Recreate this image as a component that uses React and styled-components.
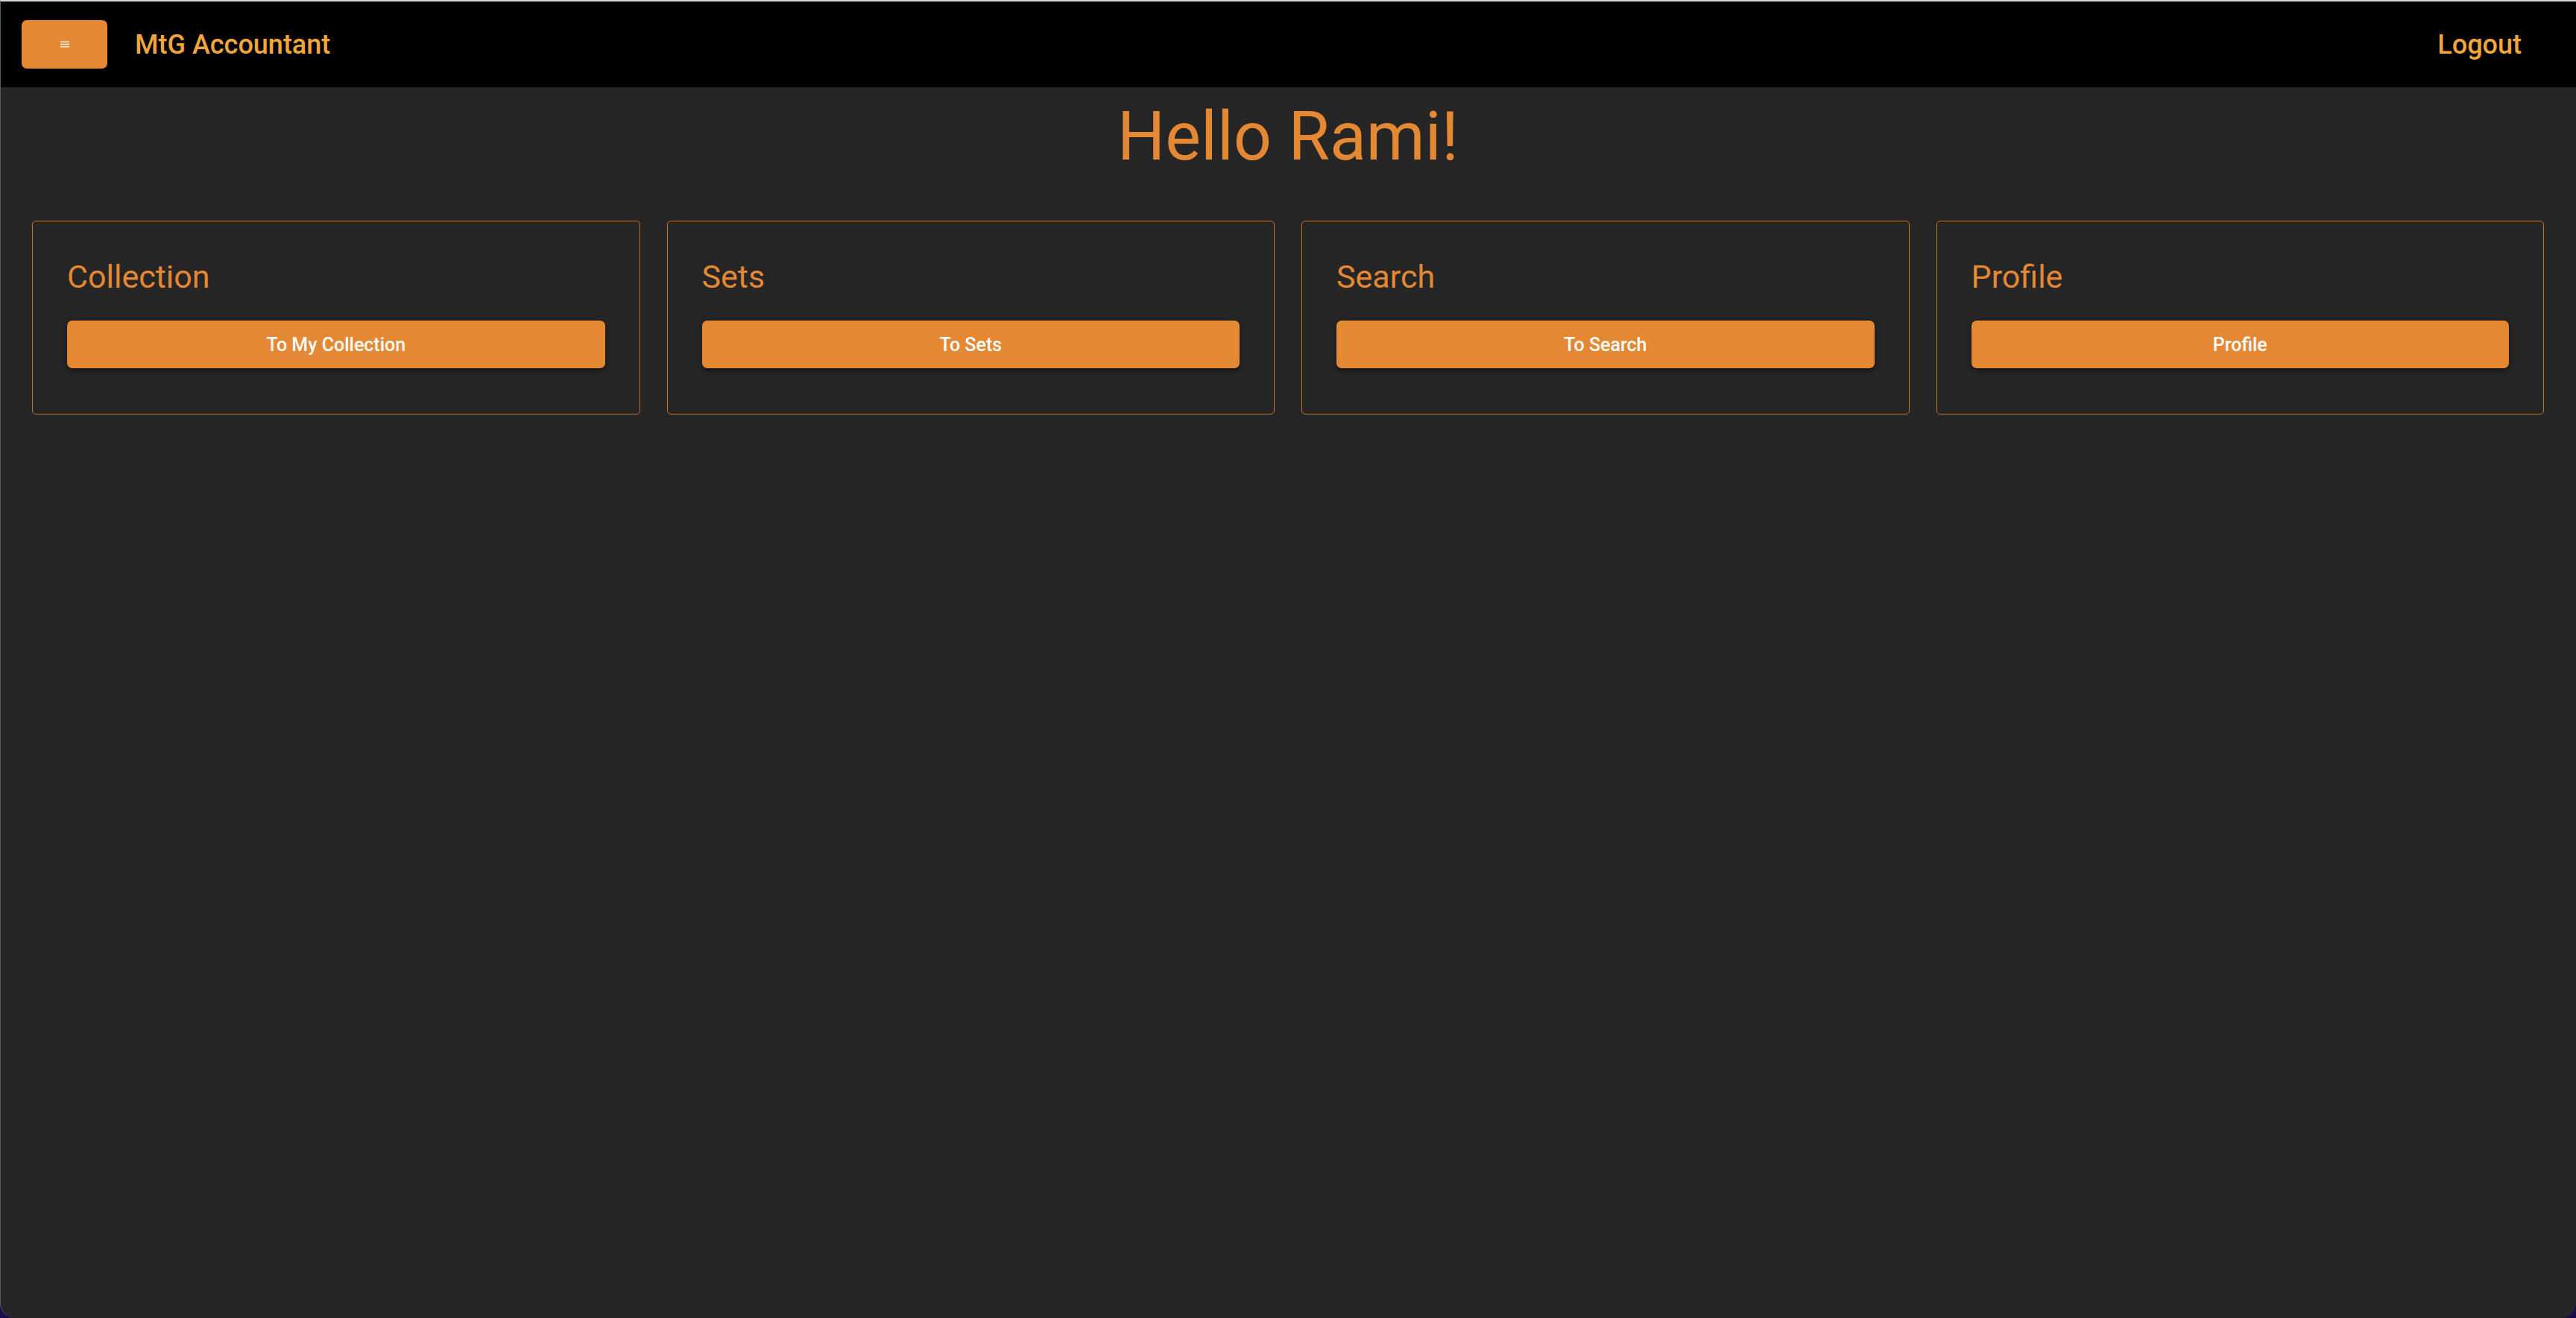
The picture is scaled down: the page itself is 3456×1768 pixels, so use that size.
import React from "react"
import styled, { createGlobalStyle } from "styled-components"

const GlobalStyle = createGlobalStyle`
  html, body {
    margin: 0;
    padding: 0;
    background: #1c0b4f;
  }
  body {
    font-family: Roboto, "Liberation Sans", sans-serif;
  }
`

const Frame = styled.div`
  min-height: 1768px;
  box-sizing: border-box;
  background: #262626;
  border-top: 2px solid #d6d6d6;
  border-left: 1px solid #5a5a5a;
  border-radius: 0 0 20px 20px;
  overflow: hidden;
`

const NavBar = styled.header`
  height: 115px;
  background: #000;
  display: flex;
  align-items: center;
  padding: 0 73px 0 28px;
`

const MenuButton = styled.button`
  width: 115px;
  height: 65px;
  border: none;
  border-radius: 7px;
  background: #e48834;
  display: flex;
  align-items: center;
  justify-content: center;
  padding: 0;
  cursor: pointer;
`

const Brand = styled.div`
  margin-left: 37px;
  font-size: 36px;
  font-weight: 500;
  color: #f1a63b;
  flex: 1;
`

const NavLink = styled.a`
  font-size: 36px;
  font-weight: 500;
  color: #f1a63b;
  text-decoration: none;
  cursor: pointer;
`

const Main = styled.main`
  padding: 13px 43px 0 42px;
`

const Greeting = styled.h1`
  margin: 0;
  text-align: center;
  font-size: 90px;
  line-height: 108px;
  font-weight: 400;
  color: #e58833;
`

const CardGrid = styled.div`
  margin-top: 58px;
  display: grid;
  grid-template-columns: repeat(4, 1fr);
  gap: 36px;
`

const Card = styled.section`
  box-sizing: border-box;
  height: 260px;
  border: 1.5px solid #c8722a;
  border-radius: 5px;
  padding: 46px 46px;
`

const CardTitle = styled.h2`
  margin: 0;
  font-size: 43px;
  line-height: 57px;
  font-weight: 400;
  color: #e58833;
`

const ActionButton = styled.button`
  margin-top: 30px;
  width: 100%;
  height: 64px;
  border: none;
  border-radius: 7px;
  background: #e48834;
  color: #fff;
  font-family: Roboto, "Liberation Sans", sans-serif;
  font-size: 25px;
  font-weight: 500;
  box-shadow: 0 3px 2px -2px rgba(0, 0, 0, 0.35), 0 4px 5px 0 rgba(0, 0, 0, 0.25),
    0 1px 10px 0 rgba(0, 0, 0, 0.18);
  cursor: pointer;
`

const MenuIcon = () => (
  <svg width="12" height="9" viewBox="0 0 12 9">
    <rect x="0" y="0.5" width="12" height="1.3" fill="#fff" />
    <rect x="0" y="3.8" width="12" height="1.3" fill="#fff" />
    <rect x="0" y="7.1" width="12" height="1.3" fill="#fff" />
  </svg>
)

const cards = [
  { title: "Collection", action: "To My Collection" },
  { title: "Sets", action: "To Sets" },
  { title: "Search", action: "To Search" },
  { title: "Profile", action: "Profile" },
]

const App = () => {
  return (
    <Frame>
      <GlobalStyle />
      <NavBar>
        <MenuButton aria-label="menu">
          <MenuIcon />
        </MenuButton>
        <Brand>MtG Accountant</Brand>
        <NavLink>Logout</NavLink>
      </NavBar>
      <Main>
        <Greeting>Hello Rami!</Greeting>
        <CardGrid>
          {cards.map((c) => (
            <Card key={c.title}>
              <CardTitle>{c.title}</CardTitle>
              <ActionButton>{c.action}</ActionButton>
            </Card>
          ))}
        </CardGrid>
      </Main>
    </Frame>
  )
}

export default App
